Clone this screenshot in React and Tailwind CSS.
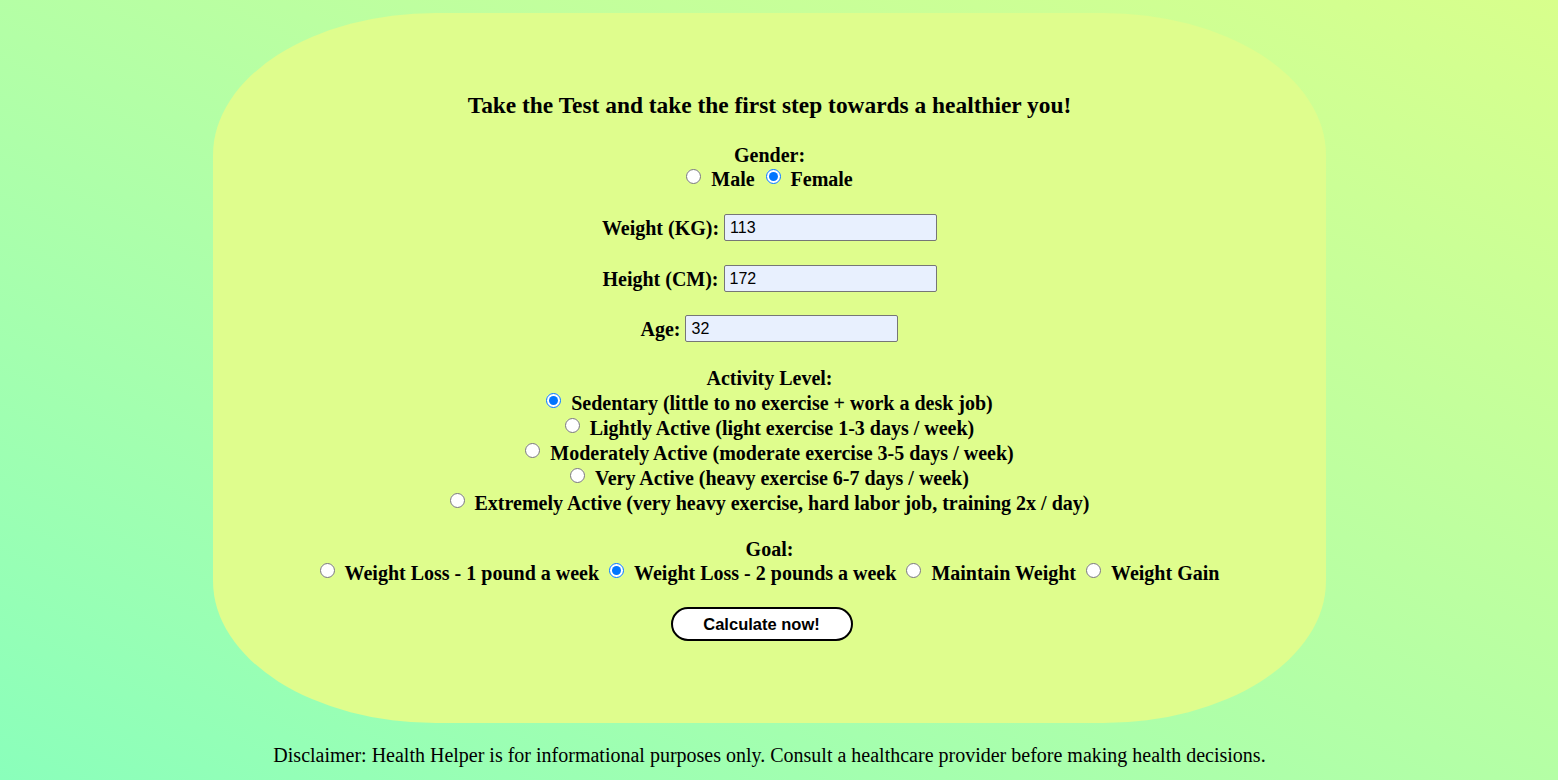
import { useState } from "react";

const serif = { fontFamily: '"Liberation Serif", "Times New Roman", serif' };

function Radio({ checked, onChange, name }) {
  return (
    <input
      type="radio"
      name={name}
      checked={checked}
      onChange={onChange}
      className="m-0 mb-[5px] h-[15px] w-[15px] shrink-0"
    />
  );
}

function NumberField({ label, value, onChange }) {
  return (
    <div className="flex h-[27px] items-center gap-[5px]">
      <span className="text-[20px] font-bold">{label}</span>
      <input
        type="text"
        value={value}
        onChange={(e) => onChange(e.target.value)}
        className="h-[27px] w-[213px] rounded-[2px] border border-[#767676] bg-[#e8f0fe] px-[5px] text-[16px] text-black outline-none"
        style={{ fontFamily: '"Liberation Sans", Arial, sans-serif' }}
      />
    </div>
  );
}

const activities = [
  "Sedentary (little to no exercise + work a desk job)",
  "Lightly Active (light exercise 1-3 days / week)",
  "Moderately Active (moderate exercise 3-5 days / week)",
  "Very Active (heavy exercise 6-7 days / week)",
  "Extremely Active (very heavy exercise, hard labor job, training 2x / day)",
];

const goals = [
  "Weight Loss - 1 pound a week",
  "Weight Loss - 2 pounds a week",
  "Maintain Weight",
  "Weight Gain",
];

export default function App() {
  const [gender, setGender] = useState("female");
  const [weight, setWeight] = useState("113");
  const [height, setHeight] = useState("172");
  const [age, setAge] = useState("32");
  const [activity, setActivity] = useState(0);
  const [goal, setGoal] = useState(1);

  return (
    <div
      className="min-h-[780px] w-full bg-gradient-to-tr from-[#8affbb] to-[#d8ff8c] text-black"
      style={serif}
    >
      <div className="flex w-[1539px] flex-col items-center pt-[13px]">
        <div className="flex h-[710px] w-[1113px] flex-col items-center rounded-[20%] bg-[#dffd8d] pt-[80px]">
          <h2 className="flex h-[26px] items-center text-[23.4px] font-bold">
            Take the Test and take the first step towards a healthier you!
          </h2>

          <div className="mt-[24px] flex h-[24px] items-center text-[20px] font-bold">Gender:</div>
          <div className="flex h-[24px] items-center text-[20px] font-bold">
            <Radio name="gender" checked={gender === "male"} onChange={() => setGender("male")} />
            <span className="ml-[10px]">Male</span>
            <span className="ml-[11px]" />
            <Radio name="gender" checked={gender === "female"} onChange={() => setGender("female")} />
            <span className="ml-[10px]">Female</span>
          </div>

          <div className="mt-[23px]">
            <NumberField label="Weight (KG):" value={weight} onChange={setWeight} />
          </div>
          <div className="mt-[24px]">
            <NumberField label="Height (CM):" value={height} onChange={setHeight} />
          </div>
          <div className="mt-[23px]">
            <NumberField label="Age:" value={age} onChange={setAge} />
          </div>

          <div className="mt-[24px] flex h-[24px] items-center text-[20px] font-bold">Activity Level:</div>
          {activities.map((a, i) => (
            <div key={a} className="flex h-[25px] items-center text-[20px] font-bold">
              <Radio name="activity" checked={activity === i} onChange={() => setActivity(i)} />
              <span className="ml-[10px]">{a}</span>
            </div>
          ))}

          <div className="mt-[22px] flex h-[24px] items-center text-[20px] font-bold">Goal:</div>
          <div className="flex h-[24px] items-center gap-[10px] text-[20px] font-bold">
            {goals.map((g, i) => (
              <div key={g} className="flex items-center gap-[10px]">
                <Radio name="goal" checked={goal === i} onChange={() => setGoal(i)} />
                <span>{g}</span>
              </div>
            ))}
          </div>

          <button
            className="mr-[16px] mt-[22px] h-[34px] w-[182px] rounded-full border-2 border-black bg-white text-[16.5px] font-bold"
            style={{ fontFamily: '"Liberation Sans", Arial, sans-serif' }}
          >
            Calculate now!
          </button>
        </div>

        <p className="mt-[20px] flex h-[24px] items-center text-[20px]">
          Disclaimer: Health Helper is for informational purposes only. Consult a healthcare provider before making health decisions.
        </p>
      </div>
    </div>
  );
}
